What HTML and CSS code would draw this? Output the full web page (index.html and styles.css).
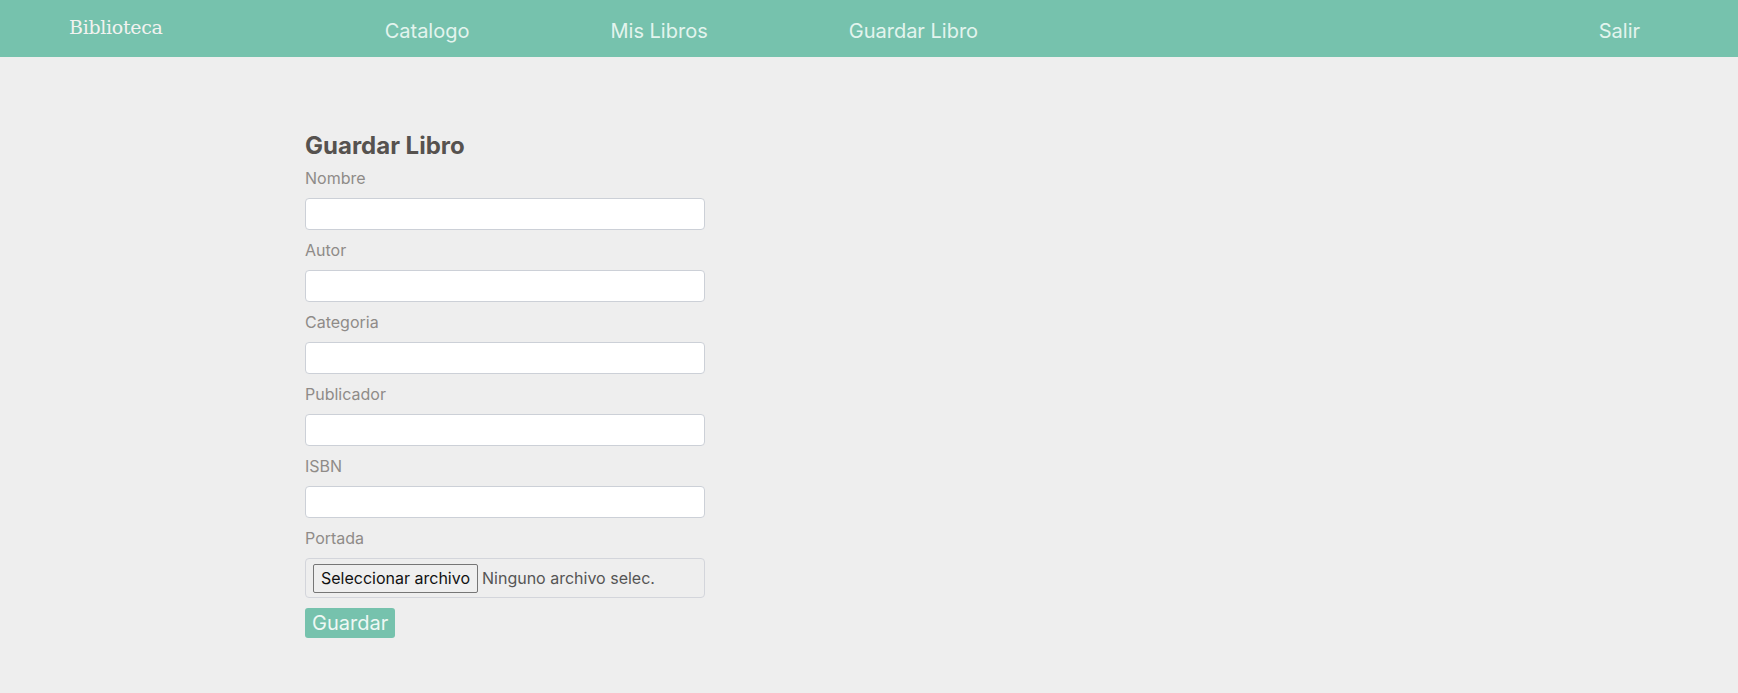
FILE: index.html
```html
<!DOCTYPE html>
<html lang="es">
<head>
<meta charset="utf-8">
<title>Guardar Libro</title>
<link rel="stylesheet" href="styles.css">
</head>
<body>
<header class="navbar">
  <a class="brand" href="#">Biblioteca</a>
  <nav class="nav-links">
    <a href="#">Catalogo</a>
    <a href="#">Mis Libros</a>
    <a href="#">Guardar Libro</a>
  </nav>
  <a class="logout" href="#">Salir</a>
</header>
<main class="content">
  <form class="book-form">
    <h2 class="form-title">Guardar Libro</h2>
    <div class="field">
      <label class="field-label">Nombre</label>
      <input class="field-input" type="text">
    </div>
    <div class="field">
      <label class="field-label">Autor</label>
      <input class="field-input" type="text">
    </div>
    <div class="field">
      <label class="field-label">Categoria</label>
      <input class="field-input" type="text">
    </div>
    <div class="field">
      <label class="field-label">Publicador</label>
      <input class="field-input" type="text">
    </div>
    <div class="field">
      <label class="field-label">ISBN</label>
      <input class="field-input" type="text">
    </div>
    <div class="field">
      <label class="field-label">Portada</label>
      <div class="file-box">
        <span class="file-button">Seleccionar archivo</span>
        <span class="file-name">Ninguno archivo selec.</span>
      </div>
    </div>
    <button class="submit" type="button">Guardar</button>
  </form>
</main>
</body>
</html>
```
FILE: styles.css
```css
* { box-sizing: border-box; }
html, body { margin: 0; padding: 0; }
body {
  background: #eeeeee;
  font-family: Inter, "Noto Sans", sans-serif;
  height: 693px;
}
.navbar {
  height: 57px;
  background: #76c2ad;
  display: flex;
  align-items: flex-start;
  padding: 0 98px 0 69px;
}
.navbar a { text-decoration: none; }
.brand {
  font-family: "DejaVu Serif", serif;
  font-size: 19px;
  line-height: 24px;
  color: #f2f2f0;
  margin-top: 15px;
  letter-spacing: -0.3px;
}
.nav-links {
  display: flex;
  gap: 141px;
  margin-left: 222px;
  margin-top: 19px;
}
.nav-links a, .logout {
  font-size: 20px;
  color: #e3f4ee;
  line-height: 24px;
}
.logout { margin-left: auto; margin-top: 19px; }
.content {
  padding: 74px 0 0 305px;
}
.book-form { width: 400px; }
.form-title {
  margin: 0 0 6px;
  font-size: 24px;
  font-weight: 700;
  line-height: 29px;
  color: #56524f;
}
.field { margin-bottom: 8px; }
.field-label {
  display: block;
  font-size: 16px;
  line-height: 24px;
  color: #8f8b88;
  margin-bottom: 8px;
}
.field-input {
  display: block;
  width: 400px;
  height: 32px;
  border: 1px solid #ccd0d7;
  border-radius: 4px;
  background: #fff;
  margin: 0;
}
.file-box {
  display: flex;
  align-items: center;
  height: 40px;
  border: 1px solid #d3d5db;
  border-radius: 4px;
  padding: 0 7px;
  font-size: 16px;
}
.file-button {
  display: inline-block;
  height: 29px;
  line-height: 27px;
  padding: 0 7px;
  background: #efefef;
  border: 1px solid #767676;
  border-radius: 2px;
  color: #111;
}
.file-name {
  margin-left: 4px;
  color: #555;
}
.submit {
  margin-top: 2px;
  height: 30px;
  padding: 0 7px;
  border: none;
  border-radius: 3px;
  background: #76c2ad;
  color: #eef8f4;
  font-family: inherit;
  font-size: 20px;
  line-height: 30px;
}
```
